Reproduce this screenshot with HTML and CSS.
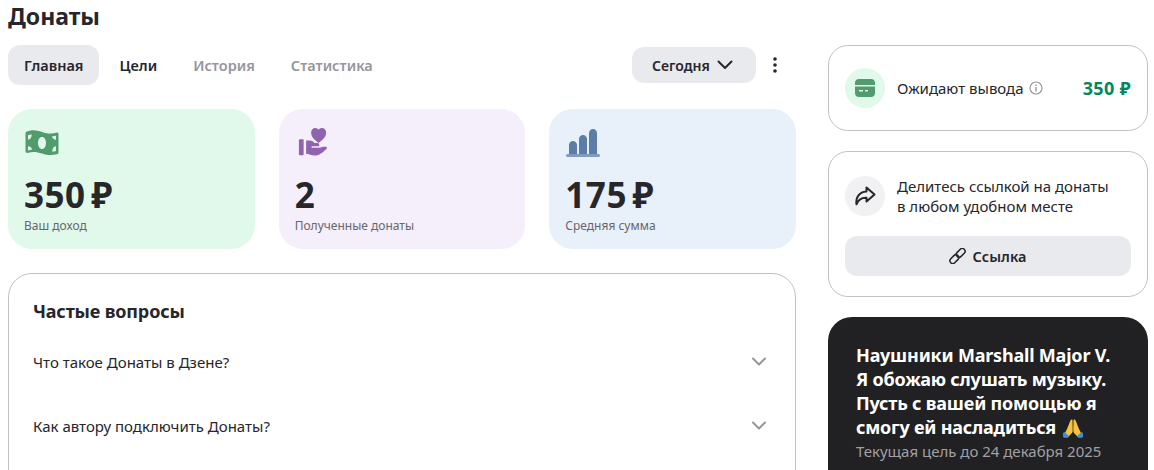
FILE: index.html
```html
<!DOCTYPE html>
<html lang="ru">

<head>
    <meta charset="UTF-8">
    <meta name="viewport" content="width=device-width, initial-scale=1.0">
    <title>Донаты</title>
    <link rel="stylesheet" href="styles.css">
</head>

<body>
    <div class="page">
        <div class="main">
            <h1 class="page-title">Донаты</h1>

            <div class="toolbar">
                <div class="tabs">
                    <div class="tab tab-active">Главная</div>
                    <div class="tab">Цели</div>
                    <div class="tab tab-muted">История</div>
                    <div class="tab tab-muted">Статистика</div>
                </div>
                <div class="period">
                    <div class="period-button">
                        Сегодня
                        <svg class="period-arrow" width="16" height="10" viewBox="0 0 16 10">
                            <path d="M1.500 1.500 8 8 14.500 1.500" fill="none" stroke="#26262b" stroke-width="2" stroke-linecap="round" stroke-linejoin="round" />
                        </svg>
                    </div>
                    <svg class="more" width="4" height="16" viewBox="0 0 4 16">
                        <circle cx="2" cy="2" r="1.800" fill="#26262b" />
                        <circle cx="2" cy="8" r="1.800" fill="#26262b" />
                        <circle cx="2" cy="14" r="1.800" fill="#26262b" />
                    </svg>
                </div>
            </div>

            <div class="stats">
                <div class="stat stat-green">
                    <svg class="stat-icon" width="36" height="30" viewBox="0 0 36 30">
                        <path transform="translate(0 -0.5) scale(1 1.1)" fill-rule="evenodd" fill="#529b6d" d="M3 4.500C9 2.500 13 3.500 18 5 23 6.500 28 7 33 5.500 34 5.500 34.500 6 34.500 7V23C34.500 24.500 34 25 33 25.200 27 26.500 23 26 18 24.500 13 23 9 22.500 3.500 24 2.500 24 1.500 23.500 1.500 22.500V6C1.500 5 2 4.800 3 4.500ZM18 9.500C15.500 9.500 14 12 14 15 14 18 15.500 20.500 18 20.500 20.500 20.500 22 18 22 15 22 12 20.500 9.500 18 9.500ZM4 8V12C6 12 7.500 10.500 7.800 7.300 6.500 7.300 5 7.500 4 8ZM4 18V22C5 21.600 6.500 21.200 8 21.200 7.700 19 6 18 4 18ZM32 8.500C30.500 8.800 29 8.900 28 8.800 28.300 10.800 30 12 32 12ZM32 18C30 18 28.500 19.500 28.200 22.800 29.500 22.800 31 22.500 32 22.200Z" />
                    </svg>
                    <div class="stat-value">350 ₽</div>
                    <div class="stat-label">Ваш доход</div>
                </div>
                <div class="stat stat-purple">
                    <svg class="stat-icon" width="36" height="32" viewBox="0 0 36 32">
                        <path fill="#8f63b0" d="M24 17C18.500 12.500 16 10 16 6 16 3 18 1 20.500 1 22 1 23.300 1.800 24 3 24.700 1.800 26 1 27.500 1 30 1 32 3 32 6 32 10 29.500 12.500 24 17Z" />
                        <rect x="3" y="13" width="5" height="17" rx="1" fill="#8f63b0" />
                        <path transform="translate(3 1) scale(0.9 1)" fill="#8f63b0" d="M8.500 13.500H13C15 13.500 17.500 14.500 18.500 16H22C23.500 16 24 17 24 18 24 18.500 23.700 19 23.500 19.500H15V21H24.500C26 21 27 20.500 28 20L31.500 20C33.500 20 33.800 22 32 23 28 26 24 29.500 19 29.500 15 29.500 11.500 27.500 8.500 27.500Z" />
                    </svg>
                    <div class="stat-value">2</div>
                    <div class="stat-label">Полученные донаты</div>
                </div>
                <div class="stat stat-blue">
                    <svg class="stat-icon" width="36" height="30" viewBox="0 0 36 30">
                        <path fill="#5b7ea8" d="M4 28V18C4 15.800 5.800 14 8 14 10.200 14 12 15.800 12 18V28ZM14 28V12C14 9.800 15.800 8 18 8 20.200 8 22 9.800 22 12V28ZM24 28V6C24 3.800 25.800 2 28 2 30.200 2 32 3.800 32 6V28Z" />
                        <rect x="1" y="27" width="34" height="3" rx="1.500" fill="#7f9cbf" />
                    </svg>
                    <div class="stat-value">175 ₽</div>
                    <div class="stat-label">Средняя сумма</div>
                </div>
            </div>

            <div class="faq">
                <h2 class="faq-title">Частые вопросы</h2>
                <div class="faq-item">
                    <span>Что такое Донаты в Дзене?</span>
                    <svg width="16" height="10" viewBox="0 0 16 10">
                        <path d="M2 1.500 8 7.500 14 1.500" fill="none" stroke="#96969b" stroke-width="2" stroke-linecap="round" stroke-linejoin="round" />
                    </svg>
                </div>
                <div class="faq-item">
                    <span>Как автору подключить Донаты?</span>
                    <svg width="16" height="10" viewBox="0 0 16 10">
                        <path d="M2 1.500 8 7.500 14 1.500" fill="none" stroke="#96969b" stroke-width="2" stroke-linecap="round" stroke-linejoin="round" />
                    </svg>
                </div>
            </div>
        </div>

        <div class="side">
            <div class="card card-payout">
                <div class="round-icon round-icon-green">
                    <svg width="20" height="18" viewBox="0 0 20 18">
                        <path fill="#529b6d" d="M0 6V4C0 1.500 1.500 0 4 0H16C18.500 0 20 1.500 20 4V6Z" />
                        <path fill-rule="evenodd" fill="#529b6d" d="M0 7.500H20V14C20 16.500 18.500 18 16 18H4C1.500 18 0 16.500 0 14ZM4 11V12.500H8V11ZM10 11V12.500H13V11Z" />
                    </svg>
                </div>
                <div class="payout-label">
                    Ожидают вывода
                    <svg width="14" height="14" viewBox="0 0 14 14">
                        <circle cx="7" cy="7" r="6" fill="none" stroke="#9a9a9e" stroke-width="1.200" />
                        <rect x="6.300" y="6" width="1.400" height="4.500" fill="#9a9a9e" />
                        <rect x="6.300" y="3.500" width="1.400" height="1.500" fill="#9a9a9e" />
                    </svg>
                </div>
                <div class="payout-sum">350 ₽</div>
            </div>

            <div class="card card-share">
                <div class="share-row">
                    <div class="round-icon round-icon-grey">
                        <svg width="22" height="20" viewBox="0 0 22 20">
                            <path d="M12.500 1.500 20.500 8.500 12.500 15.500V11.800C8 11.500 4.500 13.500 2.500 18.300 1.500 11.500 5 6 12.500 5.500Z" fill="none" stroke="#26262b" stroke-width="2" stroke-linejoin="round" />
                        </svg>
                    </div>
                    <div class="share-text">Делитесь ссылкой на донаты<br>в любом удобном месте</div>
                </div>
                <div class="link-button">
                    <svg width="17" height="16" viewBox="0 0 17 16">
                        <g fill="none" stroke="#26262b" stroke-width="1.500" transform="rotate(-45 8.500 8)">
                            <rect x="-1" y="5.200" width="10" height="5.600" rx="2.800" />
                            <rect x="8" y="5.200" width="10" height="5.600" rx="2.800" />
                        </g>
                    </svg>
                    Ссылка
                </div>
            </div>

            <div class="goal">
                <div class="goal-title">Наушники Marshall Major V. Я обожаю слушать музыку. Пусть с вашей помощью я смогу ей насладиться
                    <svg class="goal-emoji" width="22" height="20" viewBox="0 0 22 20">
                        <path fill="#f7c23c" d="M10.500 2C9.500 1 8.500 2 8 3.500L5 11 2.500 16 6 19 9.500 15.500C10.500 14.500 10.700 13.500 10.700 12.500Z" />
                        <path fill="#f7c23c" d="M11.500 2C12.500 1 13.500 2 14 3.500L17 11 19.500 16 16 19 12.500 15.500C11.500 14.500 11.300 13.500 11.300 12.500Z" />
                        <path fill="#3f8fd6" d="M1 15 2.500 14 7 18 6 19.800H2.500C1.500 19.800 1 19 1 18ZM21 15 19.500 14 15 18 16 19.800H19.500C20.500 19.800 21 19 21 18Z" />
                    </svg>
                </div>
                <div class="goal-date">Текущая цель до 24 декабря 2025</div>
            </div>
        </div>
    </div>
</body>

</html>
```

FILE: styles.css
```css
html,
body {
    height: 100%;
    overflow: hidden;
}

body {
    margin: 0;
    background-color: white;
    color: #26262b;
    font-family: "Noto Sans", "Open Sans", sans-serif;
    font-size: 15px;
}

.page {
    display: flex;
    gap: 32px;
    padding-left: 8px;
    height: 470px;
    overflow: hidden;
}

.main {
    width: 788px;
    flex-shrink: 0;
}

.side {
    width: 320px;
    flex-shrink: 0;
    padding-top: 45px;
}

.page-title {
    margin: 0;
    height: 45px;
    font-size: 23px;
    line-height: 32px;
    font-weight: 700;
}

.toolbar {
    display: flex;
    justify-content: space-between;
    align-items: center;
    height: 40px;
}

.tabs {
    display: flex;
    gap: 4px;
}

.tab {
    height: 40px;
    padding: 0 16px;
    border-radius: 12px;
    font-size: 14.5px;
    font-weight: 600;
    line-height: 41px;
}

.tab-active {
    background-color: #e9eaee;
}

.tab-muted {
    color: #96969b;
}

.period {
    display: flex;
    align-items: center;
    gap: 17px;
    padding-right: 19px;
}

.period-button {
    display: flex;
    align-items: center;
    gap: 7px;
    width: 124px;
    height: 36px;
    box-sizing: border-box;
    padding-left: 20px;
    background-color: #e9eaee;
    border-radius: 12px;
    font-size: 14px;
    font-weight: 600;
}

.stats {
    display: flex;
    gap: 24px;
    margin-top: 24px;
}

.stat {
    flex: 1;
    height: 140px;
    box-sizing: border-box;
    padding: 18px 16px 0;
    border-radius: 24px;
}

.stat-green {
    background-color: #e1f9ea;
}

.stat-purple {
    background-color: #f5eefb;
}

.stat-blue {
    background-color: #e8f0fa;
}

.stat-icon {
    display: block;
    height: 30px;
}

.stat-value {
    margin-top: 14px;
    font-size: 35px;
    line-height: 47px;
    font-weight: 700;
    letter-spacing: 0.5px;
    word-spacing: -4px;
}

.stat-label {
    color: #66666c;
    font-size: 12px;
    line-height: 16px;
}

.faq {
    margin-top: 24px;
    box-sizing: border-box;
    height: 260px;
    padding: 24px 24px 0;
    border: 1px solid #c2c2c4;
    border-radius: 24px;
}

.faq-title {
    margin: 0 0 6px;
    font-size: 18px;
    line-height: 26px;
    font-weight: 700;
    letter-spacing: -0.15px;
}

.faq-item {
    display: flex;
    justify-content: space-between;
    align-items: center;
    height: 64px;
    padding-right: 4px;
}

.card {
    box-sizing: border-box;
    margin-bottom: 20px;
    padding: 0 16px;
    border: 1px solid #c2c2c4;
    border-radius: 20px;
}

.card-payout {
    display: flex;
    align-items: center;
    height: 86px;
}

.card-share {
    height: 146px;
    padding-top: 24px;
}

.round-icon {
    display: flex;
    justify-content: center;
    align-items: center;
    width: 40px;
    height: 40px;
    border-radius: 50%;
    flex-shrink: 0;
}

.round-icon-green {
    background-color: #e1f9ea;
}

.round-icon-grey {
    background-color: #f1f1f3;
}

.payout-label {
    display: flex;
    align-items: center;
    gap: 5px;
    margin-left: 12px;
    flex-grow: 1;
}

.payout-sum {
    color: #00875f;
    font-size: 18px;
    font-weight: 700;
    letter-spacing: 0.4px;
}

.share-row {
    display: flex;
    align-items: center;
    gap: 12px;
}

.share-text {
    line-height: 20px;
}

.link-button {
    display: flex;
    justify-content: center;
    align-items: center;
    gap: 6px;
    height: 40px;
    margin-top: 20px;
    background-color: #e9eaee;
    border-radius: 12px;
    font-size: 14.5px;
    font-weight: 600;
}

.goal {
    height: 200px;
    box-sizing: border-box;
    padding: 26px 28px;
    background-color: #212123;
    border-radius: 24px;
    color: white;
}

.goal-title {
    font-size: 18px;
    line-height: 24px;
    font-weight: 700;
    letter-spacing: -0.2px;
}

.goal-emoji {
    vertical-align: -4px;
    margin-left: 2px;
}

.goal-date {
    margin-top: 2px;
    color: #a0a0a4;
    line-height: 20px;
}
```
